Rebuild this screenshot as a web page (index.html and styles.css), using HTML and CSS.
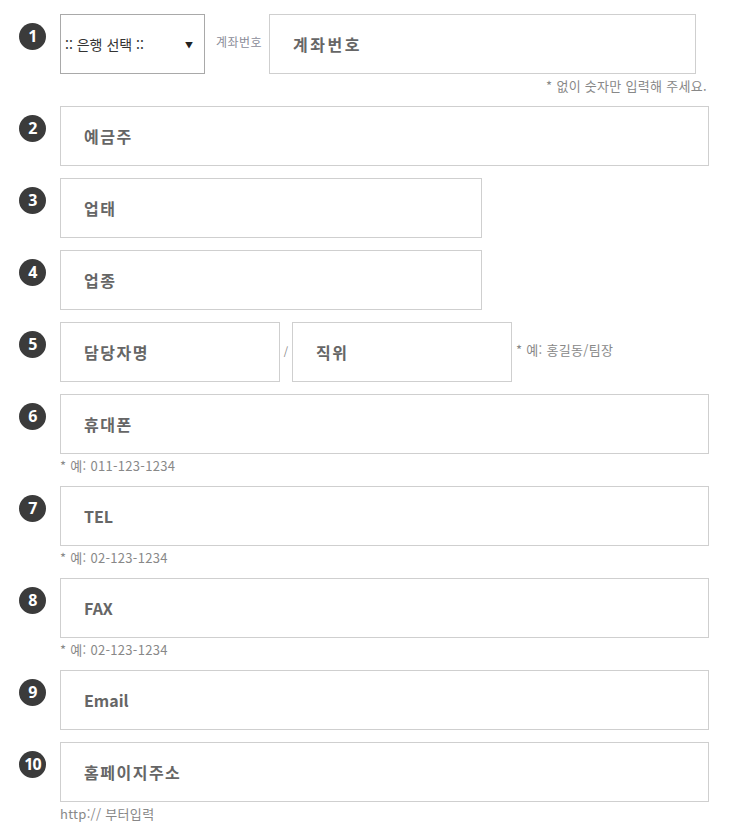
FILE: index.html
```html
<!DOCTYPE html>
<html lang="ko">
<head>
<meta charset="utf-8">
<link rel="stylesheet" href="styles.css">
</head>
<body>
<div class="form">
  <div class="group">
    <div class="row">
      <span class="num">1</span>
      <div class="select"><span>:: 은행 선택 ::</span><span class="arrow">▼</span></div>
      <span class="label">계좌번호</span>
      <div class="field w-account"><span class="ph ko spaced">계좌번호</span></div>
    </div>
    <div class="note right">* 없이 숫자만 입력해 주세요.</div>
  </div>

  <div class="group">
    <div class="row"><span class="num">2</span><div class="field w-full"><span class="ph ko">예금주</span></div></div>
  </div>
  <div class="group">
    <div class="row"><span class="num">3</span><div class="field w-mid"><span class="ph ko">업태</span></div></div>
  </div>
  <div class="group">
    <div class="row"><span class="num">4</span><div class="field w-mid"><span class="ph ko">업종</span></div></div>
  </div>
  <div class="group">
    <div class="row">
      <span class="num">5</span>
      <div class="field w-half"><span class="ph ko">담당자명</span></div>
      <span class="slash">/</span>
      <div class="field w-half"><span class="ph ko">직위</span></div>
      <span class="note inline">* 예: 홍길동/팀장</span>
    </div>
  </div>
  <div class="group">
    <div class="row"><span class="num">6</span><div class="field w-full"><span class="ph ko">휴대폰</span></div></div>
    <div class="note">* 예: 011-123-1234</div>
  </div>
  <div class="group">
    <div class="row"><span class="num">7</span><div class="field w-full"><span class="ph">TEL</span></div></div>
    <div class="note">* 예: 02-123-1234</div>
  </div>
  <div class="group">
    <div class="row"><span class="num">8</span><div class="field w-full"><span class="ph">FAX</span></div></div>
    <div class="note">* 예: 02-123-1234</div>
  </div>
  <div class="group">
    <div class="row"><span class="num">9</span><div class="field w-full"><span class="ph">Email</span></div></div>
  </div>
  <div class="group">
    <div class="row"><span class="num">10</span><div class="field w-full"><span class="ph ko">홈페이지주소</span></div></div>
    <div class="note">http:// 부터입력</div>
  </div>
</div>
</body>
</html>
```

FILE: styles.css
```css
html, body {
  margin: 0;
  padding: 0;
  background: #fff;
}
body {
  font-family: "Noto Sans CJK KR", "Noto Sans", sans-serif;
  color: #333;
}
.form {
  padding: 14px 0 0 19px;
  width: 690px;
  display: flex;
  flex-direction: column;
  gap: 12px;
}
.group {
  display: flex;
  flex-direction: column;
}
.row {
  display: flex;
  align-items: flex-start;
}
.num {
  flex: none;
  width: 27px;
  height: 27px;
  margin-top: 9px;
  margin-right: 14px;
  border-radius: 50%;
  background: #3b3b3b;
  color: #fff;
  font-family: "Open Sans", "Liberation Sans", Arial, sans-serif;
  font-weight: 700;
  font-size: 16px;
  line-height: 27px;
  text-align: center;
  letter-spacing: -0.8px;
}
.field {
  box-sizing: border-box;
  height: 60px;
  border: 1px solid #cfcfcf;
  display: flex;
  align-items: center;
  padding-left: 23px;
}
.w-full { width: 649px; }
.w-mid { width: 422px; }
.w-half { width: 220px; }
.w-account { width: 427px; }
.ph {
  font-size: 16px;
  font-weight: 700;
  color: #666;
  line-height: 20px;
}
.ph.ko { letter-spacing: 1.5px; }
.ph.spaced { letter-spacing: 2.5px; }
.select {
  box-sizing: border-box;
  width: 145px;
  height: 60px;
  border: 1px solid #a9a9a9;
  display: flex;
  align-items: center;
  justify-content: space-between;
  padding: 0 11px 0 4px;
  font-size: 14px;
  color: #333;
}
.select .arrow {
  font-size: 8px;
  color: #222;
}
.label {
  align-self: center;
  width: 50px;
  margin: -4px 3px 0 11px;
  font-size: 12px;
  letter-spacing: 0.5px;
  color: #8a8c99;
  line-height: 16px;
  white-space: nowrap;
}
.slash {
  align-self: center;
  width: 12px;
  text-align: center;
  font-size: 11px;
  color: #888;
  margin-top: -2px;
}
.note {
  margin-top: 4px;
  padding-left: 41px;
  font-size: 13px;
  letter-spacing: 0.3px;
  line-height: 16px;
  color: #888;
}
.note.right {
  text-align: right;
  padding-left: 0;
  padding-right: 2px;
}
.note.inline {
  align-self: center;
  margin: -4px 0 0 4px;
  padding-left: 0;
  white-space: nowrap;
}
```
